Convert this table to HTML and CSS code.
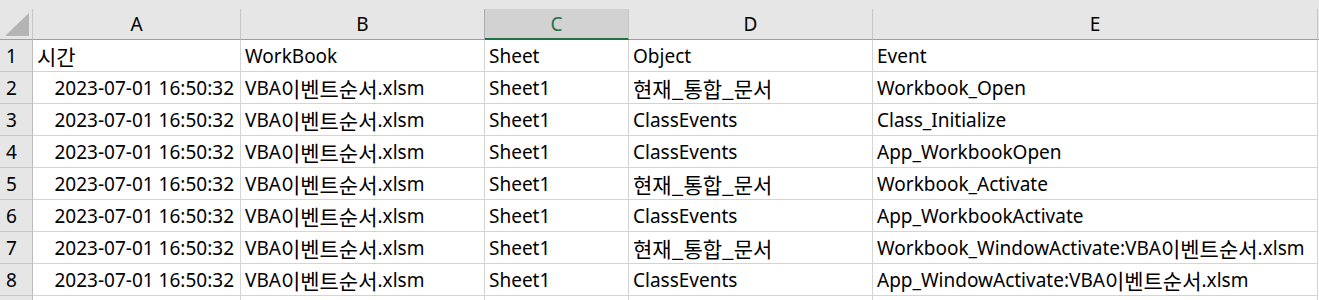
FILE: index.html
```html
<!DOCTYPE html>
<html lang="ko">
<head>
<meta charset="utf-8">
<link rel="stylesheet" href="styles.css">
</head>
<body>
<div class="sheet">
  <div class="strip"></div>

  <div class="corner"><span class="tri"></span></div>
  <div class="ch">A</div>
  <div class="ch ch-before-sel">B</div>
  <div class="ch sel">C</div>
  <div class="ch">D</div>
  <div class="ch">E</div>
  <div class="ch-end"></div>

  <div class="rh">1</div>
  <div class="c"><span class="ko">시간</span></div>
  <div class="c">WorkBook</div>
  <div class="c">Sheet</div>
  <div class="c">Object</div>
  <div class="c">Event</div>
  <div class="end"></div>

  <div class="rh">2</div>
  <div class="c num">2023-07-01 16:50:32</div>
  <div class="c">VBA<span class="ko">이벤트순서</span>.xlsm</div>
  <div class="c">Sheet1</div>
  <div class="c"><span class="ko">현재_통합_문서</span></div>
  <div class="c">Workbook_Open</div>
  <div class="end"></div>

  <div class="rh">3</div>
  <div class="c num">2023-07-01 16:50:32</div>
  <div class="c">VBA<span class="ko">이벤트순서</span>.xlsm</div>
  <div class="c">Sheet1</div>
  <div class="c">ClassEvents</div>
  <div class="c">Class_Initialize</div>
  <div class="end"></div>

  <div class="rh">4</div>
  <div class="c num">2023-07-01 16:50:32</div>
  <div class="c">VBA<span class="ko">이벤트순서</span>.xlsm</div>
  <div class="c">Sheet1</div>
  <div class="c">ClassEvents</div>
  <div class="c">App_WorkbookOpen</div>
  <div class="end"></div>

  <div class="rh">5</div>
  <div class="c num">2023-07-01 16:50:32</div>
  <div class="c">VBA<span class="ko">이벤트순서</span>.xlsm</div>
  <div class="c">Sheet1</div>
  <div class="c"><span class="ko">현재_통합_문서</span></div>
  <div class="c">Workbook_Activate</div>
  <div class="end"></div>

  <div class="rh">6</div>
  <div class="c num">2023-07-01 16:50:32</div>
  <div class="c">VBA<span class="ko">이벤트순서</span>.xlsm</div>
  <div class="c">Sheet1</div>
  <div class="c">ClassEvents</div>
  <div class="c">App_WorkbookActivate</div>
  <div class="end"></div>

  <div class="rh">7</div>
  <div class="c num">2023-07-01 16:50:32</div>
  <div class="c">VBA<span class="ko">이벤트순서</span>.xlsm</div>
  <div class="c">Sheet1</div>
  <div class="c"><span class="ko">현재_통합_문서</span></div>
  <div class="c">Workbook_WindowActivate:VBA<span class="ko">이벤트순서</span>.xlsm</div>
  <div class="end"></div>

  <div class="rh">8</div>
  <div class="c num">2023-07-01 16:50:32</div>
  <div class="c">VBA<span class="ko">이벤트순서</span>.xlsm</div>
  <div class="c">Sheet1</div>
  <div class="c">ClassEvents</div>
  <div class="c">App_WindowActivate:VBA<span class="ko">이벤트순서</span>.xlsm</div>
  <div class="end"></div>

  <div class="rh"></div>
  <div class="c"></div>
  <div class="c"></div>
  <div class="c"></div>
  <div class="c"></div>
  <div class="c"></div>
  <div class="end"></div>
</div>
</body>
</html>
```

FILE: styles.css
```css
html, body {
  margin: 0;
  padding: 0;
  background: #ffffff;
}

.sheet {
  display: grid;
  grid-template-columns: 33px 208px 244px 144px 244px 445px 1fr;
  grid-template-rows: 9px 31px repeat(9, 32px);
  font-family: "Noto Sans", "Noto Sans CJK KR", sans-serif;
  font-size: 19px;
  line-height: 24px;
  color: #000;
  width: 1319px;
  overflow: hidden;
  height: 300px;
}

.strip {
  grid-column: 1 / -1;
  background: #e6e6e6;
}

.corner {
  background: #e6e6e6;
  border-right: 1px solid #c6c6c6;
  border-bottom: 1px solid #9e9e9e;
  position: relative;
}

.tri {
  position: absolute;
  left: 5px;
  top: 4px;
  width: 0;
  height: 0;
  border-left: 24px solid transparent;
  border-bottom: 23px solid #b4b4b4;
}

.ch {
  background: #e6e6e6;
  border-right: 1px solid #c6c6c6;
  border-bottom: 1px solid #9e9e9e;
  display: flex;
  align-items: center;
  justify-content: center;
  padding-bottom: 1px;
}

.ch-before-sel {
  border-right-color: #ababab;
}

.ch.sel {
  background: #d2d2d2;
  color: #217346;
  border-bottom: 2px solid #217346;
  padding-bottom: 0;
}

.ch-end {
  background: #e6e6e6;
  border-bottom: 1px solid #9e9e9e;
}

.rh {
  background: #e6e6e6;
  border-right: 1px solid #bcbcbc;
  border-bottom: 1px solid #c6c6c6;
  display: flex;
  align-items: flex-end;
  padding: 0 0 3px 6px;
}

.c {
  border-right: 1px solid #d4d4d4;
  border-bottom: 1px solid #d4d4d4;
  display: flex;
  align-items: flex-end;
  padding: 0 0 3px 4px;
  white-space: nowrap;
  overflow: visible;
  min-width: 0;
}

.c.num {
  justify-content: flex-end;
  padding: 0 6px 3px 0;
}

.end {
  background: #ffffff;
}

.ko {
  font-family: "Noto Sans CJK KR", sans-serif;
  font-size: 21px;
}
```
